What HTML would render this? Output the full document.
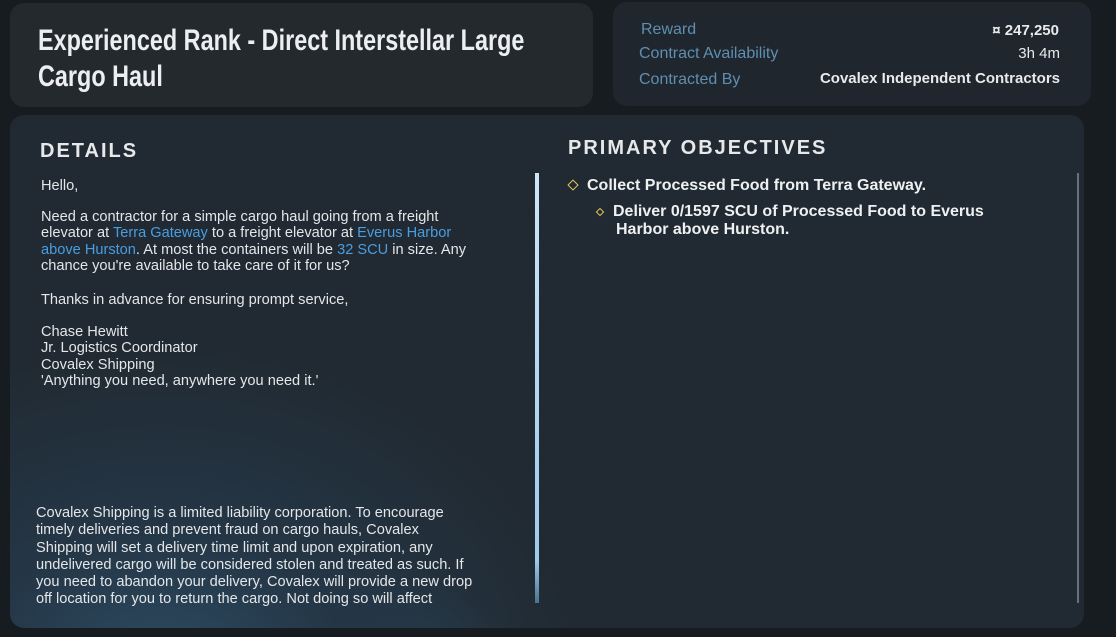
<!DOCTYPE html>
<html><head><meta charset="utf-8"><style>
*{margin:0;padding:0;box-sizing:border-box}
body{width:1116px;height:637px;overflow:hidden;background:#171c21;font-family:"Liberation Sans Narrow","Liberation Sans",sans-serif;color:#e6e8ea;position:relative}
.p{position:absolute;border-radius:14px}
.t1{left:10px;top:3px;width:583px;height:104px;background:#24292e}
.t2{left:613px;top:2px;width:478px;height:104px;background:#1f262d}
.m{left:10px;top:115px;width:1074px;height:513px;background:radial-gradient(ellipse 420px 330px at 150px 560px,#2d4b62 0%,#243646 45%,transparent 100%),radial-gradient(ellipse 300px 260px at 330px 620px,#35556e 0%,transparent 70%),#212a32}
.a{position:absolute;white-space:nowrap}
h1{position:absolute;left:38px;top:23px;font-size:30px;font-weight:bold;line-height:36px;color:#eceef0;transform:scaleX(.78);transform-origin:left}
.lb{color:#5f8fb0;font-size:16px}
.v{color:#e8eaec;font-size:15px;font-weight:bold;right:32px}
.h{font-size:20px;font-weight:bold;letter-spacing:2px;font-family:"Liberation Sans",sans-serif}
.d{left:41px;font-size:14.6px;line-height:16.3px;color:#e4e6e8}
.d b{color:#4a9de0;font-weight:normal}
.o{font-size:16px;font-weight:bold;color:#eef0f2}
.dia{display:inline-block;width:8px;height:8px;border:1.6px solid #e5c85a;transform:rotate(45deg);margin-right:10px;vertical-align:1px}
</style></head><body>
<div class="p t1"></div><div class="p t2"></div><div class="p m"></div>
<h1>Experienced Rank - Direct Interstellar Large<br>Cargo Haul</h1>
<div class="a lb" style="left:641px;top:21px">Reward</div>
<div class="a lb" style="left:639px;top:45px">Contract Availability</div>
<div class="a lb" style="left:639px;top:71px">Contracted By</div>
<div class="a v" style="left:auto;right:57px;top:22px">¤ 247,250</div>
<div class="a v" style="right:56px;top:45px;font-weight:normal">3h 4m</div>
<div class="a v" style="right:56px;top:70px">Covalex Independent Contractors</div>
<div class="a h" style="left:40px;top:140px">DETAILS</div>
<div class="a h" style="left:568px;top:137px">PRIMARY OBJECTIVES</div>
<div class="a d" style="top:178px">Hello,</div>
<div class="a d" style="top:209px">Need a contractor for a simple cargo haul going from a freight<br>elevator at <b>Terra Gateway</b> to a freight elevator at <b>Everus Harbor</b><br><b>above Hurston</b>. At most the containers will be <b>32 SCU</b> in size. Any<br>chance you're available to take care of it for us?</div>
<div class="a d" style="top:292px">Thanks in advance for ensuring prompt service,</div>
<div class="a d" style="top:324px">Chase Hewitt<br>Jr. Logistics Coordinator<br>Covalex Shipping<br>'Anything you need, anywhere you need it.'</div>
<div class="a d" style="left:36px;top:505px;line-height:17.3px">Covalex Shipping is a limited liability corporation. To encourage<br>timely deliveries and prevent fraud on cargo hauls, Covalex<br>Shipping will set a delivery time limit and upon expiration, any<br>undelivered cargo will be considered stolen and treated as such. If<br>you need to abandon your delivery, Covalex will provide a new drop<br>off location for you to return the cargo. Not doing so will affect</div>
<div class="a" style="left:535px;top:173px;width:4px;height:430px;background:linear-gradient(#cfe6f7,#9ccbee 90%,#4b7390)"></div>
<div class="a" style="left:1077px;top:173px;width:2px;height:430px;background:#9aa4ad;opacity:.6"></div>
<div class="a o" style="left:569px;top:177px"><span class="dia"></span>Collect Processed Food from Terra Gateway.</div>
<div class="a o" style="left:597px;top:203px;line-height:18px"><span class="dia" style="width:6px;height:6px;border-width:1.4px"></span>Deliver 0/1597 SCU of Processed Food to Everus<br><span style="margin-left:19px">Harbor above Hurston.</span></div>
</body></html>
